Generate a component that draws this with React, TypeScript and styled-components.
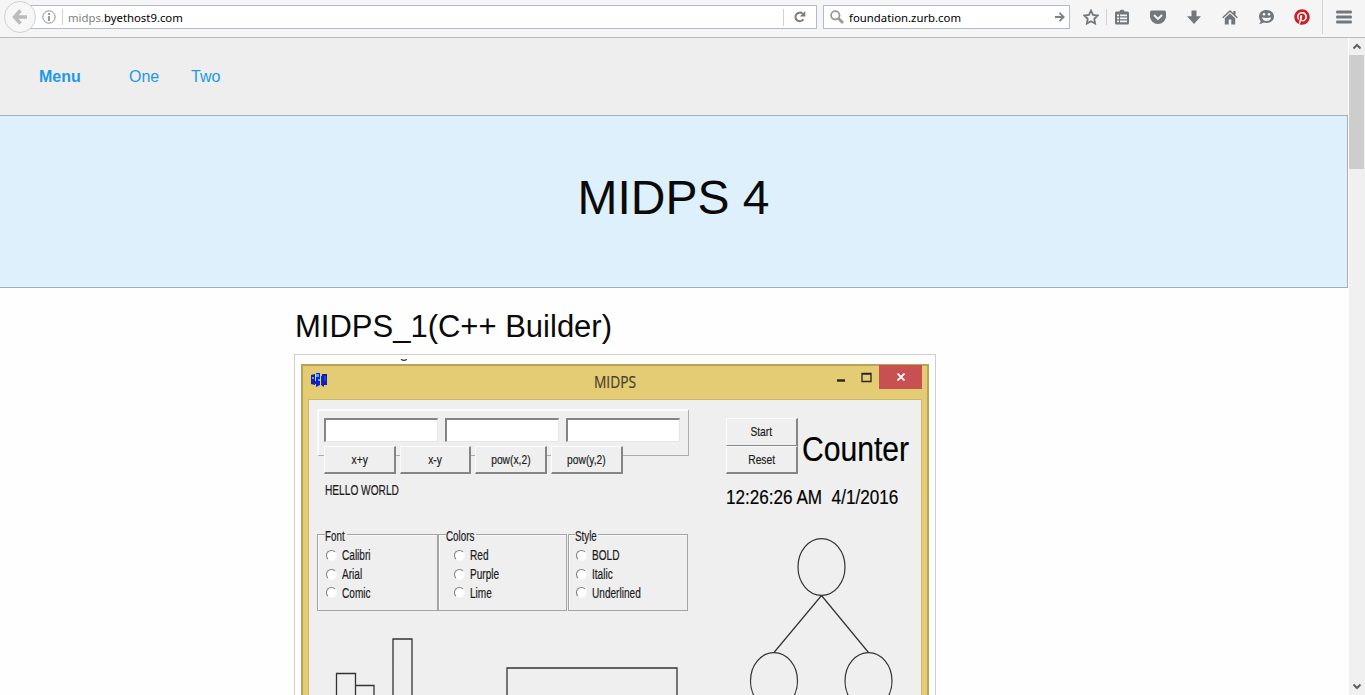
import React from 'react';
import styled, { createGlobalStyle } from 'styled-components';
import { FaPinterest } from 'react-icons/fa';

const GlobalStyle = createGlobalStyle`
  * { box-sizing: border-box; }
  html, body { margin: 0; height: 695px; overflow: hidden; }
  body { font-family: "Liberation Sans", Arial, sans-serif; color: #0a0a0a; background: #fefefe; }
  svg { display: block; flex: none; }
`;

const Screen = styled.div`
  width: 1365px;
  height: 695px;
  display: flex;
  flex-direction: column;
  overflow: hidden;
`;

/* Browser toolbar */
const Toolbar = styled.header`
  flex: none;
  height: 38px;
  display: flex;
  align-items: flex-start;
  background: #f5f5f5;
  border-bottom: 1px solid #bcbcbc;
  font: 12px "Noto Sans", "Open Sans", sans-serif;
`;
const BackButton = styled.div`
  position: relative;
  z-index: 1;
  width: 32px;
  height: 32px;
  margin: 1px -6px 0 4px;
  border: 1px solid #cfd1d4;
  border-radius: 50%;
  background: #f7f7f7;
  display: grid;
  place-items: center;
`;
const Field = styled.div<{ $width: number; $gap?: number }>`
  flex: none;
  width: ${p => p.$width}px;
  height: 24px;
  margin: 5px ${p => p.$gap ?? 0}px 0 0;
  display: flex;
  align-items: center;
  background: #fff;
  border: 1px solid #b3bac9;
  color: #000;
  white-space: nowrap;
`;
const InfoIcon = styled.div`
  margin-left: 11px;
`;
const FieldDivider = styled.i<{ $height: number }>`
  width: 1px;
  height: ${p => p.$height}px;
  background: #cfcfd4;
`;
const Address = styled.span`
  flex: 1;
  padding: 1px 0 0 5px;
  line-height: 22px;
  font-size: 11.35px;
`;
const Faint = styled.span`
  color: #808080;
`;
const Reload = styled.div`
  width: 32px;
  display: grid;
  place-items: center;
`;
const Query = styled.span`
  flex: 1;
  padding: 1px 0 0 5px;
  line-height: 22px;
  font-size: 11.35px;
`;
const ToolIcons = styled.div`
  display: flex;
  align-items: center;
  height: 34px;
  padding-left: 13px;
  color: #72777c;
`;
const Slot = styled.span<{ $gap: number }>`
  margin-right: ${p => p.$gap}px;
`;
const Separator = styled.i<{ $height: number; $gap: number }>`
  width: 1px;
  height: ${p => p.$height}px;
  margin-right: ${p => p.$gap}px;
  background: #d4d4d4;
`;

/* Web page */
const Viewport = styled.div`
  flex: 1;
  min-height: 0;
  display: flex;
`;
const Page = styled.main`
  width: 1348px;
  height: 100%;
  overflow: hidden;
`;
const Nav = styled.nav`
  height: 77px;
  display: flex;
  align-items: center;
  padding-left: 39px;
  background: #eeeeee;
  color: #2199e8;
  font-size: 16px;
`;
const NavTitle = styled.strong`
  width: 90px;
`;
const NavLink = styled.a`
  width: 62px;
`;
const Hero = styled.section`
  height: 173px;
  border: 1px solid #9fb1bd;
  border-left: 0;
  background: #def0fc;
  text-align: center;
`;
const HeroTitle = styled.h1`
  margin: 48px 0 0;
  font-size: 48px;
  line-height: 67px;
  font-weight: 400;
`;
const Content = styled.section`
  padding: 17px 0 0 295px;
`;
const Heading = styled.h3`
  margin: 0 0 7px;
  font-size: 31px;
  line-height: 43px;
  font-weight: 400;
`;
const Thumbnail = styled.figure`
  width: 642px;
  margin: -1px 0 0 -1px;
  height: 420px;
  border: 1px solid #cecece;
  background: #fefefe;
  padding: 4px 6px 0;
`;
const Caption = styled.div`
  height: 5px;
  padding-left: 99px;
`;

/* Desktop application inside the thumbnail */
const Window = styled.div`
  width: 628px;
  height: 400px;
  border: 2px solid #b9a35a;
  border-bottom: 0;
  background: #e3cc73;
  padding: 0 5px;
`;
const TitleBar = styled.div`
  height: 33px;
  display: flex;
  align-items: flex-start;
`;
const AppIcon = styled.div`
  margin: 7px 0 0 3px;
`;
const WindowTitle = styled.div`
  flex: 1;
  padding: 4px 0 0 65px;
  text-align: center;
  font: 17px/24px "Open Sans", sans-serif;
  color: #47412b;
`;
const CloseButton = styled.div`
  width: 43px;
  height: 24px;
  margin-top: -1px;
  background: #c75050;
  display: grid;
  place-items: center;
`;
const WindowControls = styled.div`
  display: flex;
`;
const Client = styled.div`
  display: flex;
  height: 370px;
  border: 1px solid #cbb66d;
  border-bottom: 0;
  background: #efefef;
  padding: 9px 0 0 8px;
  font-size: 14.5px;
  color: #1c1c1c;
`;
const LeftPane = styled.div`
  width: 408px;
  flex: none;
`;
const RightPane = styled.div`
  flex: 1;
  padding-top: 9px;
`;
const Squeezed = styled.span<{ $scale: number; $origin?: string }>`
  display: inline-block;
  white-space: pre;
  -webkit-text-stroke: 0.2px currentColor;
  transform: scaleX(${p => p.$scale});
  transform-origin: ${p => p.$origin ?? 'left'} center;
`;
const InputPanel = styled.div`
  width: 372px;
  height: 47px;
  display: flex;
  gap: 7px;
  padding: 7px 0 0 5px;
  border: 2px solid #fbfbfb;
  border-right: 1px solid #acacac;
  border-bottom: 1px solid #acacac;
`;
const TextBox = styled.div`
  width: 114px;
  height: 24px;
  background: #fff;
  border: 2px solid #848484;
  border-right: 1px solid #e6e6e6;
  border-bottom: 1px solid #e6e6e6;
`;
const ButtonRow = styled.div`
  position: relative;
  display: flex;
  gap: 4px;
  margin: -10px 0 0 7px;
`;
const Button = styled.div<{ $flat?: boolean }>`
  width: 71.700px;
  height: 28px;
  background: #efefef;
  border: 1px solid #fbfbfb;
  border-right: 2px solid #858585;
  border-bottom: ${p => (p.$flat ? 1 : 2)}px solid #858585;
  text-align: center;
  line-height: 26px;
  font-size: 13.5px;
`;
const Message = styled.div`
  height: 58px;
  padding: 7px 0 0 8px;
  line-height: 18px;
`;
const Groups = styled.div`
  display: flex;
`;
const Group = styled.div<{ $width: number; $indent: number; $gap: number }>`
  width: ${p => p.$width}px;
  height: 77px;
  margin: 2px 0 0 ${p => p.$gap}px;
  padding-left: ${p => p.$indent}px;
  border: 1px solid #a4a4a4;
  box-shadow: inset 1px 1px #fafafa;
`;
const Legend = styled.div<{ $width: number; $shift: number }>`
  width: ${p => p.$width}px;
  height: 13px;
  margin: -7px 0 5px ${p => p.$shift}px;
  background: #efefef;
  line-height: 16px;
  font-size: 14px;
`;
const Option = styled.div`
  height: 18.7px;
  display: flex;
  align-items: center;
  gap: 5px;
  font-size: 14px;
  line-height: 18px;
`;
const Radio = styled.i`
  width: 11px;
  height: 11px;
  border-radius: 50%;
  background: #fff;
  border: 1.5px solid #7d7d7d;
  border-right-color: #f8f8f8;
  border-bottom-color: #f8f8f8;
`;
const Timer = styled.div`
  display: flex;
  height: 57px;
`;
const TimerButtons = styled.div`
  padding-left: 1px;
`;
const Counter = styled.div`
  padding: 10px 0 0 4px;
  font-size: 35px;
  line-height: 42px;
  color: #000;
`;
const Clock = styled.div`
  height: 60px;
  padding: 9px 0 0 1px;
  font-size: 21px;
  line-height: 26px;
  color: #000;
`;

const groups = [
  { name: 'Font', width: 121, gap: 0, indent: 8, shift: -1, legend: 22, options: ['Calibri', 'Arial', 'Comic'] },
  { name: 'Colors', width: 129, gap: 0, indent: 15, shift: -8, legend: 30, options: ['Red', 'Purple', 'Lime'] },
  { name: 'Style', width: 120, gap: 1, indent: 7, shift: -1, legend: 23, options: ['BOLD', 'Italic', 'Underlined'] },
];

/* Scroll bar */
const ScrollBar = styled.aside`
  width: 17px;
  display: flex;
  flex-direction: column;
  background: #f0f0f0;
  border-left: 1px solid #fff;
`;
const ScrollArrow = styled.div`
  height: 17px;
  padding-left: 4px;
  display: flex;
  align-items: center;
`;
const Thumb = styled.div`
  width: 15px;
  height: 114px;
  background: #cdcdcd;
  margin-bottom: auto;
`;

const Icon = ({ children, size = 16 }: { children: React.ReactNode; size?: number }) => (
  <svg width={size} height={size} viewBox="0 0 16 16" fill="currentColor">{children}</svg>
);

export default function App() {
  return (
    <Screen>
      <GlobalStyle />
      <Toolbar>
        <BackButton>
          <svg width="16" height="16" viewBox="0 0 16 16" fill="none" stroke="#b9bbbd" strokeWidth="3.4">
            <path d="M8.5 1.5 2.5 8l6 6.5M3 8h12" />
          </svg>
        </BackButton>
        <Field $width={787} $gap={6}>
          <InfoIcon>
            <svg width="14" height="14" viewBox="0 0 14 14" fill="none" stroke="#919191">
              <circle cx="7" cy="7" r="6.2" />
              <path d="M7 3v2M7 6v5" strokeWidth="1.8" />
            </svg>
          </InfoIcon>
          <FieldDivider $height={16} style={{ marginLeft: 6 }} />
          <Address><Faint>midps.</Faint>byethost9.com</Address>
          <FieldDivider $height={17} />
          <Reload>
            <svg width="12" height="12" viewBox="0 0 12 12" fill="none">
              <path d="M9.4 8.2A4.3 4.3 0 1 1 8.6 2.7" stroke="#7d7d7d" strokeWidth="2" />
              <path d="M11.3 0v5.6H5.8z" fill="#7d7d7d" />
            </svg>
          </Reload>
        </Field>
        <Field $width={247}>
          <svg width="14" height="14" viewBox="0 0 14 14" fill="none" stroke="#999" style={{ marginLeft: 6 }}>
            <circle cx="5.3" cy="5.3" r="4.2" strokeWidth="1.8" />
            <path d="m8.3 8.3 4.7 4.7" strokeWidth="2.8" />
          </svg>
          <Query>foundation.zurb.com</Query>
          <svg width="10" height="10" viewBox="0 0 10 10" fill="none" stroke="#808080" strokeWidth="1.8" style={{ marginRight: 4 }}>
            <path d="M0 5h8.2M4.5.8 8.7 5 4.5 9.2" />
          </svg>
        </Field>
        <ToolIcons>
          <Slot $gap={7}>
            <Icon>
              <path d="m8 1.6 2 4.3 4.7.6-3.4 3.3.8 4.7L8 12.2l-4.1 2.3.8-4.7L1.3 6.5 6 5.9z" fill="none" stroke="currentColor" strokeWidth="1.8" />
            </Icon>
          </Slot>
          <Separator $height={16} $gap={7} />
          <Slot $gap={20}>
            <Icon>
              <path fillRule="evenodd" d="M1 4q0-1.500 1.500-1.500H5.500Q6 1 7 .800h2q1 .200 1.500 1.700h3Q15 2.500 15 4v10q0 1.500-1.500 1.500h-11Q1 15.500 1 14zM3 5.500v1.700h2V5.500zm3 0v1.700h7V5.500zM3 8.500v1.700h2V8.500zm3 0v1.700h7V8.500zM3 11.500v1.700h2v-1.700zm3 0v1.700h7v-1.700z" />
            </Icon>
          </Slot>
          <Slot $gap={20}>
            <Icon>
              <path fillRule="evenodd" d="M1.700 1.500h12.600Q16 1.500 16 3.200V7.500a8 7.500 0 0 1-16 0V3.200Q0 1.500 1.700 1.500zM4.700 5.200 3.300 6.700 8 11.200l4.700-4.500-1.400-1.500L8 8.400z" />
            </Icon>
          </Slot>
          <Slot $gap={20}>
            <Icon><path d="M5.500 1.500h5v5.700H15L8 15 1 7.200h4.500z" /></Icon>
          </Slot>
          <Slot $gap={20}>
            <Icon>
              <path d="M8 1 .200 8.300l1 1L8 3l6.800 6.300 1-1-2.300-2.200V2h-2.200v2.100z" />
              <path d="M8 4.500 2.800 9.300V15.500h3.900V10.500h2.600v5h3.900V9.300z" />
            </Icon>
          </Slot>
          <Slot $gap={20}>
            <Icon>
              <path d="M8.500 1C13 1 16 3.700 16 7.500S12.800 14 8.500 14q-1.500 0-2.800-.400Q4 15 1 15q1.800-1.500 1.500-3Q1 10 1 7.500C1 3.700 4 1 8.500 1z" />
              <path d="M4 8.300q4.500 1.400 9.200 0-.500 3.700-4.600 3.700T4 8.300z" fill="#f5f5f5" />
              <circle cx="6" cy="5.300" r="1.300" fill="#f5f5f5" />
              <circle cx="11" cy="5.300" r="1.300" fill="#f5f5f5" />
            </Icon>
          </Slot>
          <Slot $gap={12}><FaPinterest size={16} color="#cb2027" /></Slot>
          <Separator $height={34} $gap={13} />
          <Icon><path d="M1 1.500h14q1 0 1 1.500t-1 1.500H1q-1 0-1-1.500t1-1.500zM1 6.500h14q1 0 1 1.500t-1 1.500H1Q0 9.500 0 8t1-1.500zM1 11.500h14q1 0 1 1.500t-1 1.500H1q-1 0-1-1.500t1-1.500z" /></Icon>
        </ToolIcons>
      </Toolbar>

      <Viewport>
        <Page>
          <Nav>
            <NavTitle>Menu</NavTitle>
            <NavLink>One</NavLink>
            <NavLink>Two</NavLink>
          </Nav>
          <Hero><HeroTitle>MIDPS 4</HeroTitle></Hero>
          <Content>
            <Heading>MIDPS_1(C++ Builder)</Heading>
            <Thumbnail>
              <Caption>
                <svg width="8" height="3" viewBox="0 0 8 3" fill="none" stroke="#333" strokeWidth="1.300">
                  <path d="M1 .300Q4 2.600 6.800.300" />
                </svg>
              </Caption>
              <Window>
                <TitleBar>
                  <AppIcon>
                    <svg width="16" height="16" viewBox="0 0 16 16">
                      <path d="M0 2 4 1v11l-4-1zM11 1l5 0v11l-3 0v2l-3-2z" fill="#1420a8" />
                      <path d="M5 0h4v12l-4 2z" fill="#0a1af0" />
                      <path d="M5 1h3v3H5zM1 4h2v2H1zM7 6h2v2H7z" fill="#3db4ff" />
                      <path d="M10 3h2v7h-2zM4 8h2v3H4z" fill="#12309c" />
                      <path d="M13 3h2v5h-2z" fill="#2438ff" />
                    </svg>
                  </AppIcon>
                  <WindowTitle><Squeezed $scale={0.81} $origin="center">MIDPS</Squeezed></WindowTitle>
                  <WindowControls>
                    <svg width="42" height="22" viewBox="0 0 42 22" fill="none" stroke="#29251a">
                      <path d="M0 14.500h8" strokeWidth="2.400" />
                      <path d="M25 7.500h9v8h-9zM24.500 8h10" strokeWidth="1.300" />
                    </svg>
                    <CloseButton>
                      <svg width="8" height="8" viewBox="0 0 8 8" stroke="#fff" strokeWidth="1.800">
                        <path d="m.500.500 7 7M7.500.500l-7 7" />
                      </svg>
                    </CloseButton>
                  </WindowControls>
                </TitleBar>
                <Client>
                  <LeftPane>
                    <InputPanel><TextBox /><TextBox /><TextBox /></InputPanel>
                    <ButtonRow>
                      {['x+y', 'x-y', 'pow(x,2)', 'pow(y,2)'].map(label => (
                        <Button key={label}><Squeezed $scale={0.76} $origin="center">{label}</Squeezed></Button>
                      ))}
                    </ButtonRow>
                    <Message><Squeezed $scale={0.7}>HELLO WORLD</Squeezed></Message>
                    <Groups>
                      {groups.map(g => (
                        <Group key={g.name} $width={g.width} $indent={g.indent} $gap={g.gap}>
                          <Legend $width={g.legend} $shift={g.shift}><Squeezed $scale={0.7}>{g.name}</Squeezed></Legend>
                          {g.options.map(o => (
                            <Option key={o}><Radio /><Squeezed $scale={0.72}>{o}</Squeezed></Option>
                          ))}
                        </Group>
                      ))}
                    </Groups>
                    <svg width="400" height="90" viewBox="0 0 400 90" fill="none" stroke="#333" strokeWidth="1.300">
                      <path d="M19.500 90V62.500h19V90M38.500 74.500h18.500V90M76 90V28h19v62M190 90V57h170v33" />
                    </svg>
                  </LeftPane>
                  <RightPane>
                    <Timer>
                      <TimerButtons>
                        <Button $flat><Squeezed $scale={0.76} $origin="center">Start</Squeezed></Button>
                        <Button><Squeezed $scale={0.76} $origin="center">Reset</Squeezed></Button>
                      </TimerButtons>
                      <Counter><Squeezed $scale={0.86}>Counter</Squeezed></Counter>
                    </Timer>
                    <Clock><Squeezed $scale={0.815}>{'12:26:26 AM  4/1/2016'}</Squeezed></Clock>
                    <svg width="190" height="165" viewBox="0 0 190 165" fill="none" stroke="#333" strokeWidth="1.200">
                      <ellipse cx="96.500" cy="32" rx="23.500" ry="28.300" />
                      <path d="M96.500 60.500 49 117.500M96.500 60.500l47 57" />
                      <ellipse cx="49" cy="146" rx="23.500" ry="28.300" />
                      <ellipse cx="143.500" cy="146" rx="23.500" ry="28.300" />
                    </svg>
                  </RightPane>
                </Client>
              </Window>
            </Thumbnail>
          </Content>
        </Page>
        <ScrollBar>
          <ScrollArrow>
            <svg width="8" height="7" viewBox="0 0 8 7" fill="none" stroke="#606060" strokeWidth="2"><path d="M.500 5.500 4 2l3.500 3.500" /></svg>
          </ScrollArrow>
          <Thumb />
          <ScrollArrow>
            <svg width="8" height="7" viewBox="0 0 8 7" fill="none" stroke="#606060" strokeWidth="2"><path d="M.500 1.500 4 5l3.500-3.500" /></svg>
          </ScrollArrow>
        </ScrollBar>
      </Viewport>
    </Screen>
  );
}
